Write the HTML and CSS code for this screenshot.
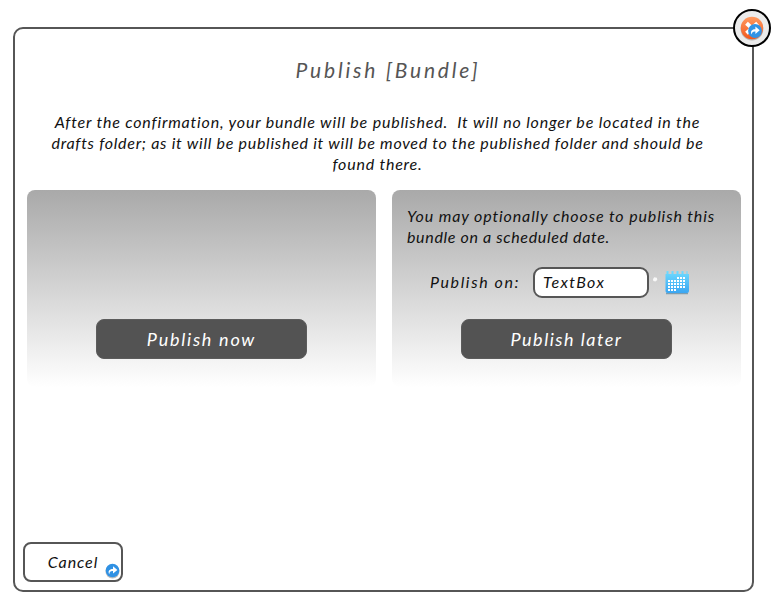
FILE: index.html
```
<!DOCTYPE html>
<html lang="en">
<head>
<meta charset="utf-8">
<title>Publish [Bundle]</title>
<link rel="stylesheet" href="styles.css">
</head>
<body>
<main class="dialog">
  <h1 class="title">Publish [Bundle]</h1>
  <p class="intro">
    <span class="line line-1">After the confirmation, your bundle will be published.&nbsp; It will no longer be located in the</span>
    <span class="line line-2">drafts folder; as it will be published it will be moved to the published folder and should be</span>
    <span class="line line-3">found there.</span>
  </p>
  <div class="options">
    <section class="panel">
      <button class="primary"><span class="now">Publish now</span></button>
    </section>
    <section class="panel">
      <p class="hint">
        <span class="line hint-1">You may optionally choose to publish this</span>
        <span class="line hint-2">bundle on a scheduled date.</span>
      </p>
      <div class="schedule">
        <label class="label" for="date">Publish on:</label>
        <input class="field" id="date" value="TextBox">
        <svg class="spark" width="6" height="7" viewBox="0 0 6 7"><path d="M1 3.2 2.2 1.2 4.8 1.8 5.3 4 3.4 5.5 1.3 5Z" fill="#f8f8f8"/></svg>
        <svg class="calendar" width="24" height="25" viewBox="0 0 24 25">
          <defs><linearGradient id="sky" x2="0" y2="1"><stop stop-color="#70dcff"/><stop offset="1" stop-color="#3ba6f2"/></linearGradient></defs>
          <path d="M1 23.5h22" stroke="#7e9daf" stroke-width="1.5"/>
          <path d="M.5 4h1V1h2v3h3V1h2v3h3V1h2v3h3V1h2v3h3V1h1v3h1.5v17q0 2-2 2h-19.5q-2 0-2-2V4Z" fill="url(#sky)"/>
          <g fill="#fff">
            <path d="M12 7h2v2h-2zM15 7h2v2h-2zM18 7h2v2h-2z"/>
            <path d="M3 10h2v2H3zM6 10h2v2H6zM9 10h2v2H9zM12 10h2v2h-2zM15 10h2v2h-2zM18 10h2v2h-2z"/>
            <path d="M3 13h2v2H3zM6 13h2v2H6zM9 13h2v2H9zM12 13h2v2h-2zM15 13h2v2h-2zM18 13h2v2h-2z"/>
            <path d="M3 16h2v2H3zM6 16h2v2H6zM9 16h2v2H9zM12 16h2v2h-2zM15 16h2v2h-2zM18 16h2v2h-2z"/>
            <path d="M3 19h2v2H3zM6 19h2v2H6zM9 19h2v2H9z"/>
          </g>
        </svg>
      </div>
      <button class="primary"><span class="later">Publish later</span></button>
    </section>
  </div>
  <button class="cancel"><span class="cancel-text">Cancel</span>
    <svg class="link" width="15" height="16" viewBox="0 0 15 16">
      <circle cx="7.5" cy="8.5" r="7" fill="#b8bcc0"/><circle cx="7.5" cy="7.5" r="6.8" fill="#2f91e4"/>
      <path d="M4.3 11.3C2.6 8.2 4.3 5.8 8 5.9V3.2L12.4 7 8 10.6V8.1C5.8 7.9 4.4 8.7 4.3 11.3Z" fill="#fff"/>
    </svg>
  </button>
  <svg class="close" width="38" height="38" viewBox="0 0 38 38">
    <defs><linearGradient id="orange" x2="0" y2="1"><stop stop-color="#ff9a60"/><stop offset="1" stop-color="#f2571c"/></linearGradient></defs>
    <circle cx="19" cy="19" r="18" fill="#ebebeb" stroke="#000" stroke-width="2"/>
    <circle cx="19" cy="20" r="11.4" fill="#b5b5b5"/>
    <circle cx="19" cy="19" r="11.2" fill="url(#orange)"/>
    <path d="M13.5 14.3 24.5 24.3M24.5 14.3 13.5 24.3" stroke="#fff" stroke-width="4"/>
    <circle cx="22" cy="22" r="6.9" fill="#3193e6"/>
    <path d="M18.7 25.5C17 22.5 18.8 20 22.4 20.2V17.6L26.7 21.3 22.4 25V22.5C20.2 22.2 18.8 23.2 18.7 25.5Z" fill="#fff"/>
  </svg>
</main>
</body>
</html>
```
FILE: styles.css
```
* { box-sizing: border-box; }
body {
  margin: 0;
  padding: 27px 0 0 13px;
  background: #fff;
  color: #111;
  font: italic 16px/21px Lato, "Open Sans", sans-serif;
}
button, input { font: inherit; color: inherit; margin: 0; }
.dialog {
  position: relative;
  display: flex;
  flex-direction: column;
  width: 741px;
  height: 565px;
  padding: 27px 11px 8px 12px;
  border: 2px solid #565656;
  border-radius: 10px;
}
.title {
  margin: 0 0 0 8px;
  color: #555;
  font-size: 21px;
  font-weight: 400;
  line-height: 28px;
  text-align: center;
  letter-spacing: 2.8px;
}
.intro { margin: 27px 13px 0 0; text-align: center; }
.line { display: block; white-space: nowrap; }
.line-1 { letter-spacing: .81px; }
.line-2 { letter-spacing: .72px; }
.line-3 { letter-spacing: .8px; }
.options { display: flex; gap: 16px; margin-top: 16px; }
.panel {
  display: flex;
  flex-direction: column;
  align-items: center;
  width: 349px;
  height: 197px;
  padding: 15px 15px 28px;
  border-radius: 8px;
  background: linear-gradient(#a9a9a9, #fff);
}
.primary {
  width: 211px;
  height: 40px;
  margin-top: auto;
  padding: 0;
  border: 1px solid #5c5c5c;
  border-radius: 8px;
  background: #535353;
  color: #fff;
  font-size: 18px;
}
.now { letter-spacing: 1.75px; }
.later { letter-spacing: 1.5px; }
.hint { align-self: stretch; margin: 0; }
.hint-1 { letter-spacing: .87px; }
.hint-2 { letter-spacing: .66px; }
.schedule { display: flex; align-items: center; align-self: flex-start; margin: 20px 0 0 23px; }
.label { width: 103px; margin-top: -2px; letter-spacing: 1.6px; }
.field {
  width: 116px;
  height: 31px;
  padding: 0 8px 2px;
  border: 2px solid #565656;
  border-radius: 9px;
  background: #fff;
  letter-spacing: 1.4px;
}
.spark { margin: -6px 0 0 3px; }
.calendar { margin-left: 7px; }
.cancel {
  position: relative;
  width: 100px;
  height: 40px;
  margin: auto 0 0 -4px;
  padding: 0 0 2px;
  border: 2px solid #565656;
  border-radius: 8px;
  background: #fff;
}
.cancel-text { letter-spacing: .9px; }
.link { position: absolute; right: 1px; bottom: 1px; }
.close { position: absolute; top: -20px; right: -19px; }
```
